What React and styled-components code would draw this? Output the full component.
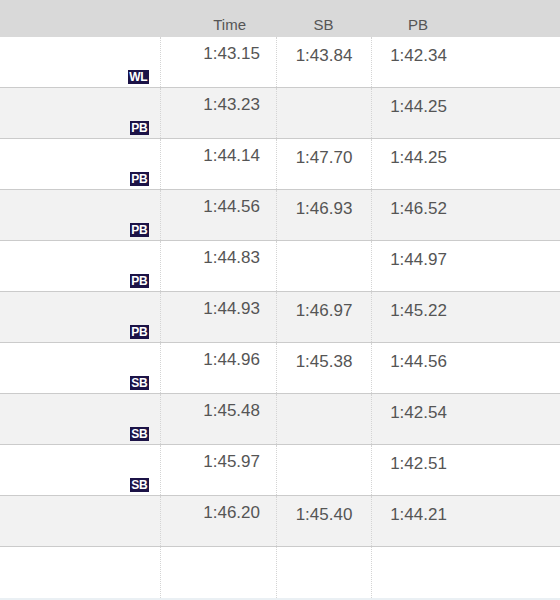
import React from 'react';
import styled, { createGlobalStyle } from 'styled-components';

const GlobalStyle = createGlobalStyle`
  html, body { margin: 0; padding: 0; background: #fff; }
  body { overflow: hidden; font-family: "Liberation Sans", Arial, sans-serif; }
`;

const cols = '160px 116px 95px 94px 1fr';

let Page = styled.div`
  width: 560px;
  height: 600px;
  display: flex;
  flex-direction: column;
  overflow: hidden;`, HeaderRow = styled.div`
  display: grid;
  grid-template-columns: ${cols};
  height: 37px;
  background: #d9d9d9;`, HeaderCell = styled.div`
  padding-top: 16px;
  font-size: 15px;
  line-height: 17px;
  color: #555;
  text-align: ${({ align }) => align || 'center'};
  padding-right: ${({ pr }) => pr || 0}px;`, Row = styled.div`
  display: grid;
  grid-template-columns: ${cols};
  height: 50px;
  background: ${({ shaded }) => shaded ? '#f2f2f2' : '#fff'};
  border-bottom: 1px solid #cbcbcb;`, FillRow = styled(Row)`
  flex: 1;
  height: auto;
  border-bottom: none;
  background: #fff;`, NameCell = styled.div`
  display: flex;
  justify-content: flex-end;
  align-items: flex-end;
  padding: 0 11px 3px 0;`, Badge = styled.span`
  display: inline-block;
  height: 14px;
  line-height: 15px;
  padding: 0 1.5px;
  background: #1c1347;
  color: #fff;
  font-size: 12px;
  font-weight: bold;
  letter-spacing: -0.2px;`, ValueCell = styled.div`
  border-left: 1px dotted #d4d4d4;
  font-size: 17px;
  line-height: 20px;
  color: #555;
  text-align: ${({ right }) => right ? 'right' : 'center'};
  padding-top: ${({ right }) => right ? 7 : 9}px;
  padding-right: ${({ right }) => right ? 16 : 0}px;`, BlankCell = styled.div``,
  Strip = styled.div`
  height: 2px;
  background: #eaf0f4;`;

const results = [
  ['1:43.15', '1:43.84', '1:42.34', 'WL'],
  ['1:43.23', '', '1:44.25', 'PB'],
  ['1:44.14', '1:47.70', '1:44.25', 'PB'],
  ['1:44.56', '1:46.93', '1:46.52', 'PB'],
  ['1:44.83', '', '1:44.97', 'PB'],
  ['1:44.93', '1:46.97', '1:45.22', 'PB'],
  ['1:44.96', '1:45.38', '1:44.56', 'SB'],
  ['1:45.48', '', '1:42.54', 'SB'],
  ['1:45.97', '', '1:42.51', 'SB'],
  ['1:46.20', '1:45.40', '1:44.21', null]
];

export default function App() {
  return <Page>
    <GlobalStyle />
    <HeaderRow>
      <BlankCell />
      <HeaderCell align="right" pr={30}>Time</HeaderCell>
      <HeaderCell>SB</HeaderCell>
      <HeaderCell>PB</HeaderCell>
      <BlankCell />
    </HeaderRow>
    {results.map(([time, sb, pb, badge], i) =>
      <Row key={i} shaded={i % 2 === 1}>
        <NameCell>{badge ? <Badge>{badge}</Badge> : null}</NameCell>
        <ValueCell right>{time}</ValueCell>
        <ValueCell>{sb}</ValueCell>
        <ValueCell>{pb}</ValueCell>
        <BlankCell />
      </Row>)}
    <FillRow>
      <BlankCell />
      <ValueCell />
      <ValueCell />
      <ValueCell />
      <BlankCell />
    </FillRow>
    <Strip />
  </Page>;
}
